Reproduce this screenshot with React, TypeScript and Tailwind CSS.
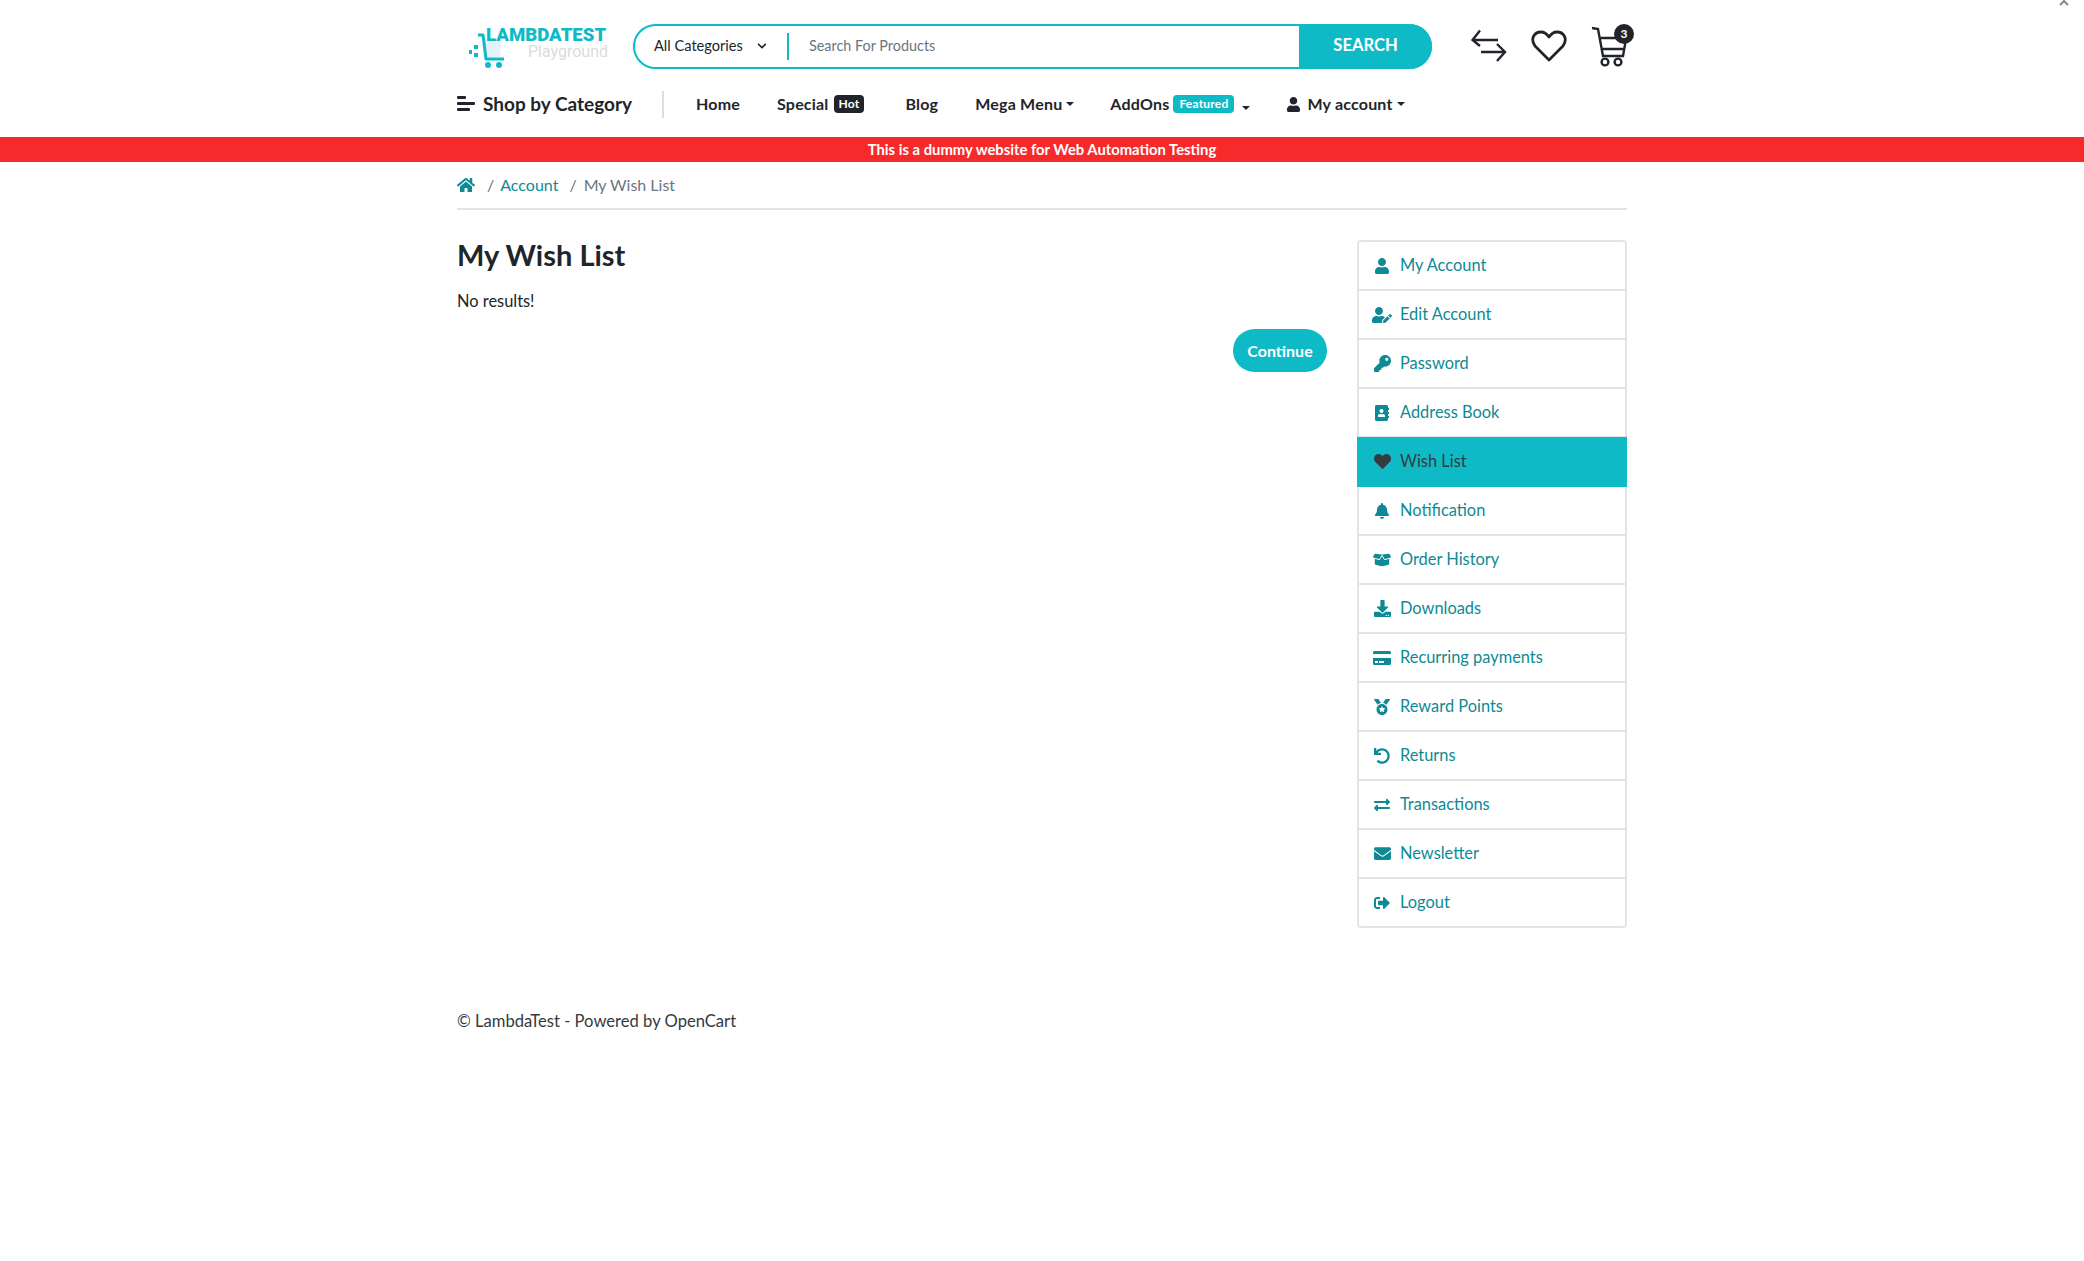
import React from "react";
import {
  FaAddressBook,
  FaBell,
  FaBoxOpen,
  FaChevronDown,
  FaCreditCard,
  FaDownload,
  FaEnvelope,
  FaExchangeAlt,
  FaHeart,
  FaHome,
  FaKey,
  FaMedal,
  FaSignOutAlt,
  FaUndo,
  FaUser,
  FaUserEdit,
} from "react-icons/fa";

const menuItems = [
  { label: "My Account", icon: <FaUser size={16} /> },
  { label: "Edit Account", icon: <FaUserEdit size={20} /> },
  { label: "Password", icon: <FaKey size={17} /> },
  { label: "Address Book", icon: <FaAddressBook size={16} /> },
  { label: "Wish List", icon: <FaHeart size={17} />, active: true },
  { label: "Notification", icon: <FaBell size={16} /> },
  { label: "Order History", icon: <FaBoxOpen size={18} /> },
  { label: "Downloads", icon: <FaDownload size={17} /> },
  { label: "Recurring payments", icon: <FaCreditCard size={18} /> },
  { label: "Reward Points", icon: <FaMedal size={16} /> },
  { label: "Returns", icon: <FaUndo size={16} /> },
  { label: "Transactions", icon: <FaExchangeAlt size={16} /> },
  { label: "Newsletter", icon: <FaEnvelope size={17} /> },
  { label: "Logout", icon: <FaSignOutAlt size={16} /> },
];

const Caret = () => (
  <span className="ml-[4px] inline-block h-0 w-0 border-x-[4px] border-t-[4px] border-x-transparent border-t-[#212529]" />
);

const Logo = () => (
  <div className="relative h-[50px] w-[139px] shrink-0">
    <svg className="absolute left-[0px] top-[5px]" width="46" height="46" viewBox="0 0 46 46" fill="none">
      <path d="M15 13h18l-2 18H17z" fill="#e4f3fb" />
      <path d="M9 9h5l3 24h18" stroke="#0fbac7" strokeWidth="3" strokeLinejoin="round" />
      <circle cx="19" cy="39" r="3" fill="#0fbac7" />
      <circle cx="30" cy="39" r="3" fill="#0fbac7" />
      <rect x="0" y="24" width="3" height="4" fill="#0fbac7" />
      <rect x="5" y="19" width="4" height="4" fill="#0fbac7" />
      <rect x="5" y="27" width="4" height="4" fill="#0fbac7" />
    </svg>
    <span className="absolute left-[17px] top-[1px] font-['Roboto',sans-serif] text-[18.6px] leading-[26px] font-black text-[#0fbac7]">
      LAMBDATEST
    </span>
    <span className="absolute right-[0px] top-[21px] font-['Roboto',sans-serif] text-[16px] leading-[20px] text-[#dcdcdc]">
      Playground
    </span>
  </div>
);

const App = () => {
  return (
    <div className="relative min-h-[1261px] bg-white font-['Lato','Noto_Sans',sans-serif] text-[16px] text-[#212529]">
      {/* close arrow in the corner */}
      <svg className="absolute right-[14px] top-[0px]" width="12" height="6" viewBox="0 0 12 6" fill="none">
        <path d="M2 5l4-4 4 4" stroke="#7d8a96" strokeWidth="2" />
      </svg>

      <div className="mx-auto w-[1170px] pb-[11px]">
        <div className="flex h-[82px] items-center pt-[10px]">
          <div className="ml-[12px] mr-[25px] flex h-[50px] items-center">
            <Logo />
          </div>
          <div className="flex h-[45px] w-[800px] items-center rounded-[24px] border-2 border-[#0fbac7]">
            <div className="flex h-[27px] w-[154px] shrink-0 items-center border-r-2 border-[#0fbac7] pl-[19px] pr-[20px] text-[14.6px]">
              <span className="flex-1">All Categories</span>
              <FaChevronDown size={10} />
            </div>
            <span className="flex-1 pl-[20px] text-[14.4px] text-[#6c757d]">Search For Products</span>
            <div className="-mr-[2px] flex h-[45px] w-[133px] items-center justify-center rounded-r-[24px] bg-[#0fbac7] pb-[1px] text-[16.6px] font-bold text-white">
              SEARCH
            </div>
          </div>
          <div className="ml-[39px] flex items-center gap-[24px]">
            <svg width="36" height="35" viewBox="0 0 36 35" fill="none" stroke="#212529" strokeWidth="2.4">
              <path d="M27 11H2M9 1.5L1.5 11 9 17" />
              <path d="M10 23h24M26 15l8 8-8 9" />
            </svg>
            <svg width="36" height="34" viewBox="0 0 36 34" fill="none" stroke="#212529" strokeWidth="2.8" strokeLinejoin="round">
              <path d="M18 31L4 17C-1 10 3 3 10 3c4 0 6 2 8 5 2-3 4-5 8-5 7 0 11 7 6 14z" />
            </svg>
            <div className="relative h-[44px] w-[36px]">
              <svg width="36" height="44" viewBox="0 0 36 44" fill="none" stroke="#212529" strokeWidth="2.4">
                <path d="M1 4l6 1 5 27h20l3-17M8 14h27M11 25h22" />
                <circle cx="14" cy="38" r="3.4" />
                <circle cx="27" cy="38" r="3.4" />
              </svg>
              <span className="absolute -right-[7px] top-[0px] flex h-[20px] w-[20px] items-center justify-center rounded-full bg-[#212529] text-[12px] font-bold text-white">
                3
              </span>
            </div>
          </div>
        </div>

        <div className="flex h-[44px] items-center text-[16px] font-bold tracking-[0.2px]">
          <div className="flex h-[27px] w-[207px] items-center border-r-2 border-[#dedede]">
            <svg className="mr-[8px]" width="18" height="16" viewBox="0 0 18 16" fill="#212529">
              <rect x="0" y="0" width="9" height="3" rx="1" />
              <rect x="0" y="6" width="18" height="3" rx="1" />
              <rect x="0" y="12" width="13" height="3" rx="1" />
            </svg>
            <span className="text-[19px] tracking-normal">Shop by Category</span>
          </div>
          <span className="ml-[32px]">Home</span>
          <span className="ml-[37px]">Special</span>
          <span className="ml-[5px] rounded-[4px] bg-[#212529] px-[5px] text-[12px] leading-[18px] text-white">Hot</span>
          <span className="ml-[41px]">Blog</span>
          <span className="ml-[37px]">Mega Menu</span>
          <Caret />
          <span className="ml-[36px]">AddOns</span>
          <span className="ml-[4px] rounded-[4px] bg-[#0fbac7] px-[6px] text-[12px] leading-[18px] text-white">Featured</span>
          <span className="ml-[4px]">
            <Caret />
          </span>
          <span className="ml-[36px] mr-[6px]">
            <FaUser size={15} />
          </span>
          <span>My account</span>
          <Caret />
        </div>
      </div>

      <div className="h-[25px] bg-[#f62a2a] text-center text-[14.8px] leading-[25px] font-bold text-white">
        This is a dummy website for Web Automation Testing
      </div>

      <div className="mx-auto w-[1170px]">
        <div className="flex h-[48px] items-center border-b-2 border-[#e4e4e4] text-[16px]">
          <FaHome size={18} className="text-[#0d8a95]" />
          <span className="ml-[12px] text-[#6c757d]">/</span>
          <span className="ml-[6px] text-[#0d8a95]">Account</span>
          <span className="ml-[11px] text-[#6c757d]">/</span>
          <span className="ml-[7px] text-[#6c757d]">My Wish List</span>
        </div>

        <div className="mt-[30px] flex justify-between">
          <div className="w-[870px]">
            <h1 className="text-[29px] leading-[30px] font-bold">My Wish List</h1>
            <p className="mt-[19px] text-[16.4px] leading-[24px]">No results!</p>
            <div className="mt-[16px] flex justify-end">
              <span className="flex h-[43px] w-[94px] items-center justify-center rounded-full bg-[#0fbac7] text-[16px] font-bold text-white">
                Continue
              </span>
            </div>
          </div>

          <div className="w-[270px] rounded-[4px] border-2 border-[#e4e4e4]">
            {menuItems.map((item) => (
              <div
                key={item.label}
                className={
                  item.active
                    ? "-mx-[2px] -mt-[1px] flex h-[50px] items-center bg-[#0fbac7] pb-[1px] pl-[2px] text-[#343a40]"
                    : "flex h-[49px] items-center border-b-2 border-[#e4e4e4] text-[#0d8a95] last:h-[47px] last:border-b-0"
                }
              >
                <span className="flex w-[41px] shrink-0 justify-center pl-[5px]">{item.icon}</span>
                <span className="text-[16.4px]">{item.label}</span>
              </div>
            ))}
          </div>
        </div>

        <p className="mt-[81px] text-[16.6px] text-[#343a40]">© LambdaTest - Powered by OpenCart</p>
      </div>
    </div>
  );
};

export default App;
